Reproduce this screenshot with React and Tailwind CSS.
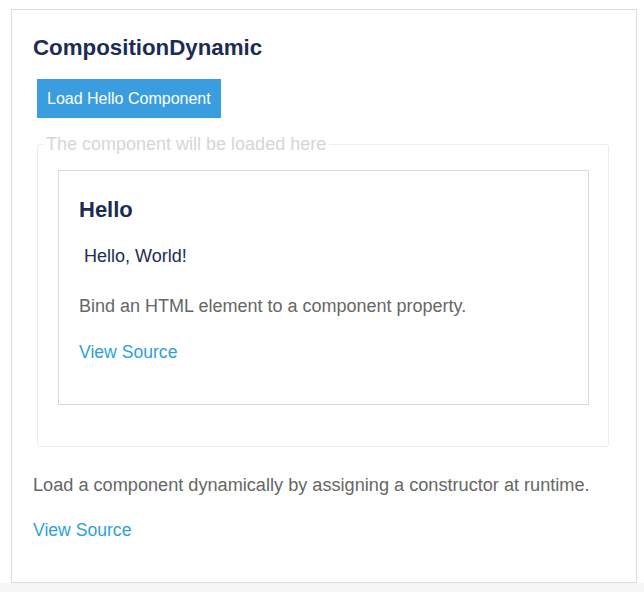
import React from "react";

export default function App() {
  return (
    <div className="h-[592px] w-[644px] bg-white font-['Liberation_Sans',Arial,sans-serif] flex flex-col">
      <div className="ml-[11px] mt-[9px] w-[626px] h-[574px] border border-[#dcdcdc] bg-white px-[21px] pt-[23px]">
        {/* Title */}
        <h2 className="text-[22.3px] leading-[30px] font-bold text-[#1b2c55]">
          CompositionDynamic
        </h2>

        {/* Load button */}
        <button className="mt-[16px] ml-[4px] h-[39px] px-[10px] bg-[#3a9de0] text-white text-[16px] leading-[39px]">
          Load Hello Component
        </button>

        {/* Placeholder fieldset */}
        <fieldset className="mt-[16px] ml-[4px] w-[572px] border border-[#ececec] rounded-[3px] pl-[20px] pr-[19px] pt-[16px] pb-[41px]">
          <legend className="ml-[-15px] px-[3px] text-[18px] leading-[20px] text-[#d6d6d6]">
            The component will be loaded here
          </legend>
          <div className="border border-[#d9d9d9] px-[20px] pt-[26px] pb-[42px]">
            <h3 className="text-[22px] leading-[26px] font-bold text-[#1b2c55]">Hello</h3>
            <p className="mt-[23px] ml-[5px] text-[18px] leading-[20px] text-[#1b2c55]">Hello, World!</p>
            <p className="mt-[30px] text-[18px] leading-[20px] text-[#666666]">
              Bind an HTML element to a component property.
            </p>
            <a className="block mt-[26px] text-[17.6px] leading-[20px] text-[#2f9fda]">View Source</a>
          </div>
        </fieldset>

        {/* Description */}
        <p className="mt-[28px] text-[18.15px] leading-[20px] text-[#666666]">
          Load a component dynamically by assigning a constructor at runtime.
        </p>
        <a className="block mt-[25px] text-[17.6px] leading-[20px] text-[#2f9fda]">View Source</a>
      </div>
      <div className="flex-1 bg-[#f6f6f6]" />
    </div>
  );
}
